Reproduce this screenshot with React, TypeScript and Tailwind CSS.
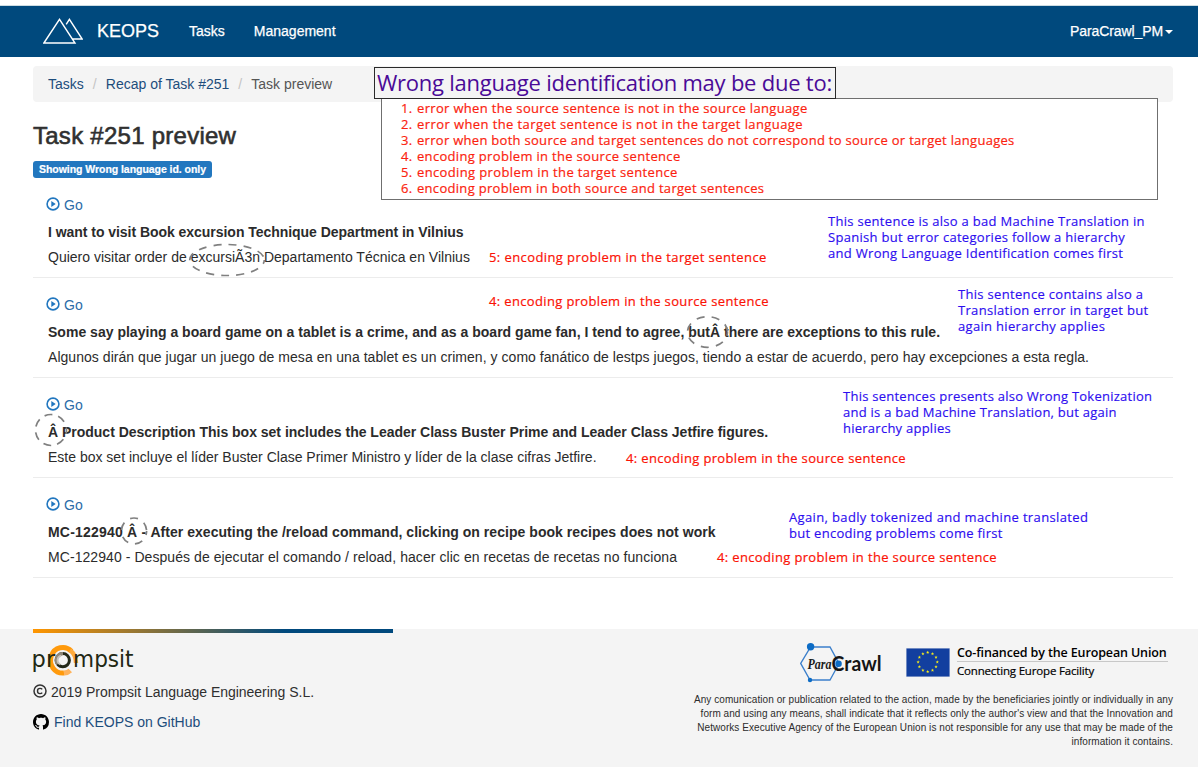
import type { ReactNode } from "react";

const note = "absolute z-10 whitespace-pre font-['Open_Sans',sans-serif] text-[13px] leading-4";
const redNote = `${note} text-[#fb1205] [-webkit-text-stroke:0.2px_#fb1205]`;
const blueNote = `${note} text-[#2d0df0] [-webkit-text-stroke:0.15px_#2d0df0]`;

const causes = [
  { text: "error when the source sentence is not in the source language", tracking: "tracking-[0.33px]" },
  { text: "error when the target sentence is not in the target language", tracking: "tracking-[0.41px]" },
  { text: "error when both source and target sentences do not correspond to source or target languages", tracking: "tracking-[0.29px]" },
  { text: "encoding problem in the source sentence", tracking: "tracking-[0.32px]" },
  { text: "encoding problem in the target sentence", tracking: "tracking-[0.37px]" },
  { text: "encoding problem in both source and target sentences", tracking: "tracking-[0.3px]" },
];

function PlayIcon() {
  return (
    <svg className="h-[14px] w-[14px] shrink-0" viewBox="0 0 14 14">
      <circle cx="7" cy="7" r="5.9" fill="none" stroke="#2277bf" strokeWidth="1.6" />
      <path d="M5.3 4.1v5.8L9.7 7z" fill="#2277bf" />
    </svg>
  );
}

function Sentence({ source, target, sourceClass = "", targetClass = "" }: { source: ReactNode; target: string; sourceClass?: string; targetClass?: string }) {
  return (
    <div className="flex h-[100px] flex-col border-b border-[#ececec] px-[15px] pt-[17px] text-[#2b2b2b]">
      <a className="-ml-[2px] flex h-5 items-center gap-[4px] text-[#2b6ca8]">
        <span className="-mt-[2px]"><PlayIcon /></span>
        <span>Go</span>
      </a>
      <div className={`mt-[7px] whitespace-nowrap font-bold leading-5 ${sourceClass}`}>{source}</div>
      <div className={`mt-[5px] whitespace-nowrap leading-5 ${targetClass}`}>{target}</div>
    </div>
  );
}

function Ring({ className, children }: { className: string; children: ReactNode }) {
  return <svg className={`absolute z-10 overflow-visible ${className}`} fill="none" stroke="#808080" strokeWidth="1.7">{children}</svg>;
}

function Prompsit() {
  return (
    <svg className="block h-[34px] w-[104px] overflow-visible" viewBox="33 643 104 34">
      <path d="M71.5 651.2A12.3 12.8 0 1 0 64 673" fill="none" stroke="#ff9a0c" strokeWidth="5" />
      <path d="M64 673Q68 672.8 70.3 670.5" fill="none" stroke="#ffb35c" strokeWidth="5" />
      <path d="M70 650.3Q75.8 654 76 663" fill="none" stroke="#ffab3e" strokeWidth="4.4" />
      <g fontFamily="DejaVu Sans, sans-serif" fontSize="22.5" fill="#222814">
        <text x="31.6" y="667.2">pr</text>
        <text x="73.1" y="667.2" textLength="60.5" lengthAdjust="spacingAndGlyphs">mpsit</text>
      </g>
      <circle cx="62.8" cy="660.2" r="6.6" fill="none" stroke="#24291a" strokeWidth="3" />
      <path d="M63 653.6A6.6 6.6 0 0 0 57.6 664.2" fill="none" stroke="#8f8778" strokeWidth="3.2" />
      <path d="M61 655.6A4.8 4.8 0 0 0 60 664.4" fill="none" stroke="#c9c4bb" strokeWidth="1.8" />
    </svg>
  );
}

function ParaCrawl() {
  return (
    <svg className="block h-[42px] w-[84px] overflow-visible" viewBox="799 642 84 42">
      <path d="M800.7 663.4 810.6 647H830l9 16.6-9 16.4h-20z" fill="none" stroke="#3b7fcb" strokeWidth="1.3" />
      <circle cx="810.6" cy="646.8" r="3.7" fill="#0d6cc5" />
      <circle cx="810" cy="680" r="2.2" fill="#0d6cc5" />
      <circle cx="838.6" cy="663.8" r="3.2" fill="#0d6cc5" />
      <text x="807.5" y="669" fontFamily="Liberation Serif, serif" fontStyle="italic" fontWeight="700" fontSize="14" textLength="24" lengthAdjust="spacingAndGlyphs" fill="#1c1c1c">Para</text>
      <text x="831.5" y="670.5" fontFamily="Lato, sans-serif" fontWeight="700" fontSize="20" textLength="50" lengthAdjust="spacingAndGlyphs" fill="#151515">Crawl</text>
    </svg>
  );
}

const stars = Array.from({ length: 12 }, (_, i) => {
  const a = (i * Math.PI) / 6;
  return { x: 21.7 + 9.6 * Math.sin(a), y: 14 - 9.6 * Math.cos(a) };
});
const starPath = "M0-1.7.45-.55 1.65-.5.7.25 1 1.45 0 .8-1 1.45-.7.25-1.65-.5-.45-.55z";

function EuFlag() {
  return (
    <svg className="block h-[29px] w-[44px]" viewBox="0 0 44 29">
      <path d="M0 0h44v29H0z" fill="#cfd6e5" />
      <path d="M.5.5h43v28H.5z" fill="#123f9f" />
      {stars.map((s, i) => <path key={i} d={starPath} transform={`translate(${s.x} ${s.y})`} fill="#f8ee1a" />)}
    </svg>
  );
}

export default function App() {
  return (
    <div className="relative flex h-[767px] w-[1198px] flex-col overflow-hidden bg-white font-['Liberation_Sans',Arial,sans-serif] text-[14px] leading-5 text-[#333]">
      <header className="mt-[5px] flex h-[52px] shrink-0 items-center border-t border-[#cddce2] bg-[#00497d] pb-[2px] pl-[43px] pr-[25px] text-white [-webkit-text-stroke:0.25px_#fff]">
        <svg className="h-[26px] w-[40px]" viewBox="43 17.5 40 26" fill="none" stroke="#fff" strokeWidth="1.4">
          <path d="M43.9 42.5 59.5 18.8 75 42.5zM66.2 23.8 69.4 18.9 82.2 38.5H72.6" />
        </svg>
        <span className="ml-[14px] text-[18px]">KEOPS</span>
        <span className="ml-[30px]">Tasks</span>
        <span className="ml-[29px]">Management</span>
        <span className="ml-auto tracking-[-0.09px]">ParaCrawl_PM</span>
        <span className="ml-[2px] mt-[2px] h-0 w-0 border-x-4 border-t-4 border-x-transparent border-t-white" />
      </header>

      <main className="ml-[33px] h-[572px] w-[1140px] shrink-0 pt-[9px]">
        <nav className="flex h-9 items-center rounded bg-[#f4f4f4] pl-[15px] text-[#1d4d7c]">
          <span>Tasks</span>
          <span className="w-[22px] text-center text-[#c4c4c4]">/</span>
          <span>Recap of Task #251</span>
          <span className="w-[22px] text-center text-[#c4c4c4]">/</span>
          <span className="text-[#555]">Task preview</span>
        </nav>
        <h1 className="mt-[20px] h-[28px] text-[24px] leading-[28px] tracking-[0.26px] text-[#303030] [-webkit-text-stroke:0.6px_#303030]">Task #251 preview</h1>
        <div className="mt-[11px] flex h-[17px] w-[179px] items-center whitespace-nowrap rounded-[3px] bg-[#2277bf] pb-px pl-[6px] text-[10.5px] font-bold tracking-[-0.045px] text-white [-webkit-text-stroke:0.2px_#fff]">
          Showing Wrong language id. only
        </div>
        <section>
          <Sentence
            source="I want to visit Book excursion Technique Department in Vilnius"
            sourceClass="tracking-[-0.04px]"
            target="Quiero visitar order de excursiÃ3n Departamento Técnica en Vilnius"
            targetClass="tracking-[0.01px]"
          />
          <Sentence
            source="Some say playing a board game on a tablet is a crime, and as a board game fan, I tend to agree, butÂ there are exceptions to this rule."
            sourceClass="tracking-[0.015px]"
            target="Algunos dirán que jugar un juego de mesa en una tablet es un crimen, y como fanático de lestps juegos, tiendo a estar de acuerdo, pero hay excepciones a esta regla."
            targetClass="tracking-[0.041px]"
          />
          <Sentence
            source="Â Product Description This box set includes the Leader Class Buster Prime and Leader Class Jetfire figures."
            sourceClass="tracking-[-0.01px]"
            target="Este box set incluye el líder Buster Clase Primer Ministro y líder de la clase cifras Jetfire."
          />
          <Sentence
            source={<><span className="tracking-[0.2px]">MC-122940 Â - </span>After executing the /reload command, clicking on recipe book recipes does not work</>}
            sourceClass="tracking-[0.042px]"
            target="MC-122940 - Después de ejecutar el comando / reload, hacer clic en recetas de recetas no funciona"
            targetClass="tracking-[0.066px]"
          />
        </section>
      </main>

      <footer className="flex h-[138px] shrink-0 justify-between bg-[#f4f4f4] pl-[33px] pr-[25px]">
        <div className="w-[360px]">
          <div className="h-1 bg-[linear-gradient(90deg,#ff9600,#00497d_70%)]" />
          <div className="mt-[10px]"><Prompsit /></div>
          <div className="mt-[5px] flex h-5 items-center gap-[4px] text-[#2f2f2f]">
            <svg className="-mt-[2px] h-[14px] w-[14px]" viewBox="0 0 14 14" fill="none" stroke="#333">
              <circle cx="7" cy="7" r="6" strokeWidth="1.5" />
              <path d="M9.2 5.4C8.8 4.7 8 4.4 7 4.4 5.4 4.4 4.5 5.4 4.5 7S5.4 9.6 7 9.6c1 0 1.8-.3 2.2-1" strokeWidth="1.4" />
            </svg>
            <span className="tracking-[-0.02px]">2019 Prompsit Language Engineering S.L.</span>
          </div>
          <div className="mt-[10px] flex h-5 items-center gap-[5px] text-[#1d4d7c]">
            <svg className="h-4 w-4" viewBox="0 0 16 16" fill="#000">
              <path d="M8 0C3.58 0 0 3.58 0 8c0 3.54 2.29 6.53 5.47 7.59.4.07.55-.17.55-.38 0-.19-.01-.82-.01-1.49-2.01.37-2.53-.49-2.69-.94-.09-.23-.48-.94-.82-1.13-.28-.15-.68-.52-.01-.53.63-.01 1.08.58 1.23.82.72 1.21 1.87.87 2.33.66.07-.52.28-.87.51-1.07-1.78-.2-3.64-.89-3.64-3.95 0-.87.31-1.59.82-2.15-.08-.2-.36-1.02.08-2.12 0 0 .67-.21 2.2.82.64-.18 1.32-.27 2-.27s1.36.09 2 .27c1.53-1.04 2.2-.82 2.2-.82.44 1.1.16 1.92.08 2.12.51.56.82 1.27.82 2.15 0 3.07-1.87 3.75-3.65 3.95.29.25.54.73.54 1.48 0 1.07-.01 1.93-.01 2.2 0 .21.15.46.55.38A8.01 8.01 0 0 0 16 8c0-4.42-3.58-8-8-8z" />
            </svg>
            <span>Find KEOPS on GitHub</span>
          </div>
        </div>
        <div className="flex flex-col items-end pt-[13px]">
          <div className="flex h-[42px] w-[374px]">
            <ParaCrawl />
            <div className="ml-[23px] mt-[6px]"><EuFlag /></div>
            <div className="ml-[7px] mt-[2px] flex w-[211px] flex-col whitespace-nowrap font-['Open_Sans',sans-serif] text-black">
              <div className="h-[18px] border-b border-[#c8c8c8] text-[12.5px] font-semibold leading-[17px] tracking-[-0.13px]">Co-financed by the European Union</div>
              <div className="text-[11.5px] leading-[17px] tracking-[-0.17px] [-webkit-text-stroke:0.2px_#000]">Connecting Europe Facility</div>
            </div>
          </div>
          <p className="mt-[9px] whitespace-pre text-right text-[10px] leading-[14px] tracking-[0.059px] text-[#2c2c2c]">
            {"Any comunication or publication related to the action, made by the beneficiaries jointly or individually in any\nform and using any means, shall indicate that it reflects only the author's view and that the Innovation and\nNetworks Executive Agency of the European Union is not responsible for any use that may be made of the\ninformation it contains."}
          </p>
        </div>
      </footer>

      <aside className="absolute left-[381px] top-[98px] z-10 h-[102px] w-[777px] border border-[#6f6f6f] bg-white pl-[19px] pt-px font-['Open_Sans',sans-serif] text-[13px] leading-4 text-[#fb1f10] [-webkit-text-stroke:0.2px_#fb1f10]">
        {causes.map((c, i) => (
          <div key={i} className={`flex whitespace-nowrap ${c.tracking}`}><span className="w-4">{i + 1}.</span><span>{c.text}</span></div>
        ))}
      </aside>
      <div className="absolute left-[374px] top-[67px] z-10 flex h-8 w-[462px] items-center whitespace-nowrap border border-[#2a2a2a] bg-[#f4f4f4] pb-[2px] pl-[2px] font-['Open_Sans',sans-serif] text-[22px] leading-none tracking-[-0.232px] text-[#4a0a97]">
        Wrong language identification may be due to:
      </div>

      <div className={`left-[489px] top-[249px] tracking-[0.41px] ${redNote}`}>5: encoding problem in the target sentence</div>
      <div className={`left-[489px] top-[293px] tracking-[0.35px] ${redNote}`}>4: encoding problem in the source sentence</div>
      <div className={`left-[626px] top-[450px] tracking-[0.35px] ${redNote}`}>4: encoding problem in the source sentence</div>
      <div className={`left-[717px] top-[549px] tracking-[0.35px] ${redNote}`}>4: encoding problem in the source sentence</div>

      <div className={`left-[828px] top-[213px] tracking-[0.3px] ${blueNote}`}>{"This sentence is also a bad Machine Translation in\nSpanish but error categories follow a hierarchy\nand Wrong Language Identification comes first"}</div>
      <div className={`left-[958px] top-[286px] tracking-[0.32px] ${blueNote}`}>{"This sentence contains also a\nTranslation error in target but\nagain hierarchy applies"}</div>
      <div className={`left-[843px] top-[388px] tracking-[0.25px] ${blueNote}`}>{"This sentences presents also Wrong Tokenization\nand is a bad Machine Translation, but again\nhierarchy applies"}</div>
      <div className={`left-[789px] top-[509px] tracking-[0.36px] ${blueNote}`}>
        <div>Again, badly tokenized and machine translated</div>
        <div className="tracking-[0.28px]">but encoding problems come first</div>
      </div>

      <Ring className="left-[189px] top-[243px] h-[34px] w-[76px]"><ellipse cx="38" cy="17" rx="37.3" ry="15.5" strokeDasharray="8 7" strokeDashoffset="4" /></Ring>
      <Ring className="left-[687px] top-[316px] h-[32px] w-[42px]"><ellipse cx="20.5" cy="16" rx="20" ry="15.3" strokeDasharray="8 7.2" strokeDashoffset="4" /></Ring>
      <Ring className="left-[35px] top-[414px] h-[32px] w-[32px]"><ellipse cx="16" cy="16" rx="15.5" ry="15.5" strokeDasharray="8 6" strokeDashoffset="4" /></Ring>
      <Ring className="left-[121px] top-[517px] h-[28px] w-[26px]"><ellipse cx="13" cy="14" rx="12.6" ry="13" strokeDasharray="8 7" strokeDashoffset="4" /></Ring>
    </div>
  );
}
